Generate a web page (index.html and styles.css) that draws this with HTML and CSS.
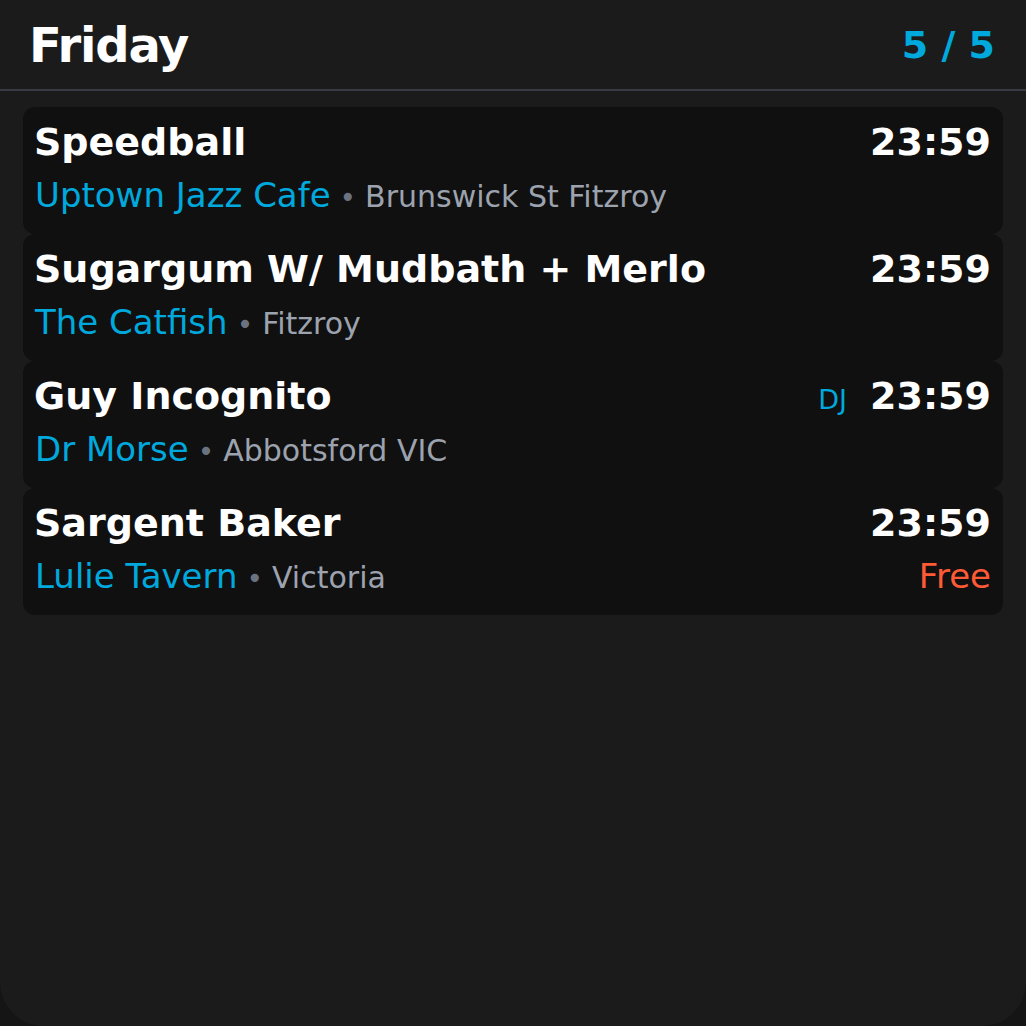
FILE: index.html
```html
<!DOCTYPE html>
<html>
<head>
<meta charset="utf-8">
<link rel="stylesheet" href="styles.css">
</head>
<body>
<div class="screen">
  <header class="header">
    <h1 class="day">Friday</h1>
    <div class="count">5 / 5</div>
  </header>
  <div class="list">
    <div class="card">
      <div class="row">
        <div class="title">Speedball</div>
        <div class="right"><span class="time">23:59</span></div>
      </div>
      <div class="row">
        <div class="where"><span class="venue">Uptown Jazz Cafe</span><span class="dot">•</span><span class="loc">Brunswick St Fitzroy</span></div>
      </div>
    </div>
    <div class="card">
      <div class="row">
        <div class="title">Sugargum W/ Mudbath + Merlo</div>
        <div class="right"><span class="time">23:59</span></div>
      </div>
      <div class="row">
        <div class="where"><span class="venue">The Catfish</span><span class="dot">•</span><span class="loc">Fitzroy</span></div>
      </div>
    </div>
    <div class="card">
      <div class="row">
        <div class="title">Guy Incognito</div>
        <div class="right"><span class="tag">DJ</span><span class="time">23:59</span></div>
      </div>
      <div class="row">
        <div class="where"><span class="venue">Dr Morse</span><span class="dot">•</span><span class="loc">Abbotsford VIC</span></div>
      </div>
    </div>
    <div class="card">
      <div class="row">
        <div class="title">Sargent Baker</div>
        <div class="right"><span class="time">23:59</span></div>
      </div>
      <div class="row">
        <div class="where"><span class="venue">Lulie Tavern</span><span class="dot">•</span><span class="loc">Victoria</span></div>
        <div class="price">Free</div>
      </div>
    </div>
  </div>
</div>
</body>
</html>
```
FILE: styles.css
```css
html, body {
  margin: 0;
  padding: 0;
  background: #151515;
}
body {
  font-family: "DejaVu Sans", sans-serif;
  color: #fff;
}
.screen {
  width: 1026px;
  height: 1026px;
  background: #1b1b1b;
  border-radius: 0 0 44px 44px;
  overflow: hidden;
  box-sizing: border-box;
}
.header {
  display: flex;
  align-items: center;
  justify-content: space-between;
  padding: 17px 31px 16px 29px;
  border-bottom: 2px solid #363b45;
}
.day {
  margin: 0;
  font-size: 48px;
  font-weight: bold;
  letter-spacing: -1.2px;
  line-height: 56px;
}
.count {
  font-size: 38px;
  font-weight: bold;
  color: #00a9dd;
}
.list {
  display: flex;
  flex-direction: column;
  padding: 16px 23px 0;
}
.card {
  background: #101010;
  border-radius: 12px;
  padding: 13px 12px 17px;
  display: flex;
  flex-direction: column;
  gap: 12px;
}
.row {
  display: flex;
  justify-content: space-between;
  align-items: baseline;
}
.title {
  font-size: 38px;
  font-weight: bold;
  line-height: 44px;
  margin-left: -1px;
}
.right {
  display: flex;
  align-items: baseline;
  gap: 23px;
}
.time {
  font-size: 38px;
  font-weight: bold;
  line-height: 44px;
}
.tag {
  font-size: 27px;
  color: #00a9dd;
}
.where {
  font-size: 34px;
  line-height: 38px;
}
.venue {
  color: #00a9dd;
}
.dot {
  color: #6b7280;
  font-size: 28px;
  margin: 0 9px;
}
.loc {
  font-size: 30px;
  color: #9ca3af;
}
.price {
  font-size: 34px;
  line-height: 38px;
  color: #ff5a36;
}
```
